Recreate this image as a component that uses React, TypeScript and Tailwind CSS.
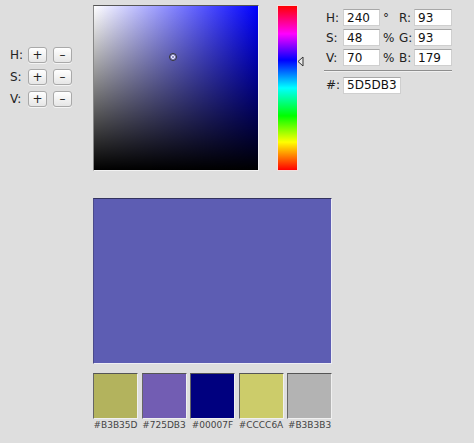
import React from "react";

const SWATCHES = ["#B3B35D", "#725DB3", "#00007F", "#CCCC6A", "#B3B3B3"];

const font = "font-['DejaVu_Sans','Liberation_Sans',sans-serif]";

// small +/- stepper button
function StepButton({ label }: { label: string }) {
  return (
    <button className="w-[19px] h-[16px] rounded-[3px] border border-[#a9a9a9] bg-[linear-gradient(to_bottom,#ffffff,#e6e6e6)] flex items-center justify-center text-[12px] leading-none text-[#222] shadow-[0_1px_0_#f4f4f4]">
      {label}
    </button>
  );
}

function NumField({ value, width }: { value: string; width: string }) {
  return (
    <div
      className={`${width} h-[17px] bg-white border border-[#cfcfcf] border-t-[#a8a8a8] flex items-center pl-[3px] text-[12px] text-[#111]`}
    >
      {value}
    </div>
  );
}

function FieldRow({
  a,
  av,
  unit,
  b,
  bv,
}: {
  a: string;
  av: string;
  unit: string;
  b: string;
  bv: string;
}) {
  return (
    <div className="flex items-center h-[17px]">
      <span className="w-[17px] text-[12px] text-[#222]">{a}</span>
      <NumField value={av} width="w-[37px]" />
      <span className="w-[19px] pl-[3px] text-[12px] text-[#222] leading-none">{unit}</span>
      <span className="w-[15px] text-[12px] text-[#222]">{b}</span>
      <NumField value={bv} width="w-[38px]" />
    </div>
  );
}

export default function App() {
  return (
    <div className={`w-[474px] h-[443px] bg-[#dedede] overflow-hidden ${font}`}>
      <div className="flex items-start">
        {/* HSV steppers */}
        <div className="w-[93px] pt-[46px] pl-[10px] flex flex-col gap-[4px]">
          {["H:", "S:", "V:"].map((l) => (
            <div key={l} className="flex items-center">
              <span className="w-[18px] text-[12px] text-[#222]">{l}</span>
              <div className="flex gap-[6px]">
                <StepButton label="+" />
                <StepButton label="–" />
              </div>
            </div>
          ))}
        </div>

        {/* saturation / value square */}
        <div className="mt-[5px] relative w-[166px] h-[166px] border border-[#f2f2f2] border-t-[#555] border-l-[#888] bg-[linear-gradient(to_top,#000,rgba(0,0,0,0)),linear-gradient(to_right,#fff,#00f)]">
          <div className="absolute left-[75px] top-[47px] w-[8px] h-[8px] rounded-full border border-[#333] bg-[#8888cc] flex items-center justify-center">
            <div className="w-[4px] h-[4px] rounded-full border border-white bg-[#5d5db3]" />
          </div>
        </div>

        {/* hue strip */}
        <div className="ml-[18px] mt-[5px] relative w-[21px] h-[166px] border border-[#f4dede] bg-[linear-gradient(to_bottom,#ff0000,#ff00ff_17%,#0000ff_33%,#00ffff_50%,#00ff00_67%,#ffff00_83%,#ff0000)]">
          <svg
            className="absolute left-[19px] top-[50px]"
            width="7"
            height="11"
            viewBox="0 0 7 11"
          >
            <path d="M6 1 L1 5.5 L6 10 Z" fill="#e8e8e8" stroke="#333" strokeWidth="1" />
          </svg>
        </div>

        {/* numeric fields */}
        <div className="ml-[28px] mt-[9px] flex flex-col gap-[3px]">
          <FieldRow a="H:" av="240" unit="°" b="R:" bv="93" />
          <FieldRow a="S:" av="48" unit="%" b="G:" bv="93" />
          <FieldRow a="V:" av="70" unit="%" b="B:" bv="179" />
          <div className="mt-[1px] w-[128px] -ml-[2px] h-[2px] bg-[#8e8e8e] border-b border-[#f0f0f0]" />
          <div className="mt-[1px] flex items-center">
            <span className="w-[17px] text-[12px] text-[#222]">#:</span>
            <NumField value="5D5DB3" width="w-[58px]" />
          </div>
        </div>
      </div>

      {/* current colour preview */}
      <div className="ml-[93px] mt-[27px] w-[239px] h-[166px] bg-[#5D5DB3] border border-[#eeeef4] border-t-[#33335f] border-l-[#4a4a8a]" />

      {/* palette swatches */}
      <div className="ml-[93px] mt-[9px] flex gap-[3.5px]">
        {SWATCHES.map((c) => (
          <div key={c} className="w-[45px] flex flex-col items-center">
            <div
              className="w-[45px] h-[46px] border border-[#f0f0f0] border-t-[#555] border-l-[#666]"
              style={{ backgroundColor: c }}
            />
            <span className="mt-[2px] text-[9px] text-[#444] leading-none">{c}</span>
          </div>
        ))}
      </div>
    </div>
  );
}
